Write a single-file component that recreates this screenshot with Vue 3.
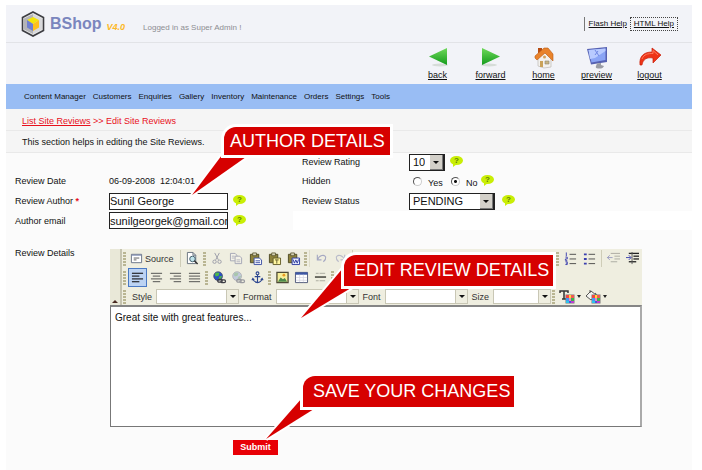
<script setup>
import { ref } from 'vue'

const author = ref('Sunil George')
const email = ref('sunilgeorgek@gmail.com')
const rating = ref('10')
const hidden = ref('no')
const status = ref('PENDING')
const details = ref('Great site with great features...')

const menu = ['Content Manager', 'Customers', 'Enquiries', 'Gallery', 'Inventory', 'Maintenance', 'Orders', 'Settings', 'Tools']

const actions = [
  { name: 'back', art: '<defs><linearGradient id="gb" x1="0" y1="0" x2="0" y2="1"><stop offset="0" stop-color="#6fd95a"/><stop offset="1" stop-color="#149b1c"/></linearGradient></defs><ellipse cx="13" cy="18" rx="8" ry="1.5" fill="#d6dcd8"/><path d="M2 9.500L20 1V18Z" fill="url(#gb)"/>' },
  { name: 'forward', art: '<defs><linearGradient id="gf" x1="0" y1="0" x2="0" y2="1"><stop offset="0" stop-color="#6fd95a"/><stop offset="1" stop-color="#149b1c"/></linearGradient></defs><ellipse cx="9" cy="18" rx="8" ry="1.500" fill="#d6dcd8"/><path d="M20 9.500L2 1V18Z" fill="url(#gf)"/>' },
  { name: 'home', art: '<path d="M5 10L11 5L18 11V20L11 21L5 19Z" fill="#f3f1ee" stroke="#bdb9b4" stroke-width=".7"/><path d="M5 1H9V6H5Z" fill="#b64c12"/><path d="M2 9L11 1H15L20 7V14L12 6L4 13L2 11Z" fill="#e9832c" stroke="#b95b15" stroke-width=".6"/><path d="M7 14H10V20H7Z" fill="#caa25a"/><path d="M12 14H16V17H12Z" fill="#c9b583" stroke="#8d8672" stroke-width=".6"/><circle cx="11.500" cy="10" r="1.500" fill="#d5a15c"/>' },
  { name: 'preview', art: '<path d="M1 2L21 0V15L5 17.500Z" fill="#5661b2"/><path d="M2.500 3L19.500 1.500V13L5.500 15.500Z" fill="#8aa4f5"/><path d="M2.500 3L19.500 1.500V4L9 11L4 12Z" fill="#b8caff"/><path d="M9 3L13 9M12 4L9 8" stroke="#6f86e2" stroke-width="1"/><path d="M11 16.500L15 16V18L18 19Q17 22 12 21.500Q9 21 10 19Z" fill="#9a9ca5"/>' },
  { name: 'logout', art: '<path d="M1 18C0 9 5 5 13 5V1L22 8L14 16V11C8 10 4 12 3 18Z" fill="#ee3417" stroke="#c81e08" stroke-width=".7"/><path d="M3 12C5 7 9 6.500 14 6.500V3.500L19 8" fill="none" stroke="#ff7a5c" stroke-width="1"/>' }
]

const lines = (rows, c = '#4a4a48') => rows.map(([x, y, w]) => `<path d="M${x} ${y}h${w}" stroke="${c}"/>`).join('')
const clip = '<path d="M1.500 2.500H10.500V11.500H1.500Z" fill="#8d823c" stroke="#4e4924"/><path d="M4 1H8V4H4Z" fill="#d7d4b6" stroke="#4e4924" stroke-width=".8"/>'
const globe = (a, b, k) => `<circle cx="5.500" cy="5.500" r="4.800" fill="${a}" stroke="${k}" stroke-width=".6"/><path d="M3 1.500L7 2L6 5L3 6L2 4ZM7 6L10 5L8 9L6 8Z" fill="${b}"/><g fill="none" stroke="${k}" stroke-width="1.300"><rect x="5" y="9" width="5" height="3" rx="1.500"/><rect x="8.500" y="9.500" width="5" height="3" rx="1.500"/></g>`
const palette = '<path d="M5.500 4.500H14.500V13.500H5.500Z" fill="#777"/><path d="M6 5h3v3H6z" fill="#f04444"/><path d="M9 5h2v3H9z" fill="#ffd83a"/><path d="M11 5h3v3h-3z" fill="#f05a50"/><path d="M6 8h3v3H6z" fill="#3e9ded"/><path d="M9 8h2v3H9z" fill="#f07acd"/><path d="M11 8h3v3h-3z" fill="#3ab54a"/><path d="M6 11h3v2H6z" fill="#2dc4ea"/><path d="M9 11h2v2H9z" fill="#5050d8"/><path d="M11 11h3v2h-3z" fill="#c03cd0"/>'

const art = {
  preview: '<path d="M1.500 .5H7.500L10.500 3.500V12.500H1.500Z" fill="#fff" stroke="#66707c"/><path d="M7.500 .5V3.500H10.500" fill="none" stroke="#66707c"/><circle cx="7" cy="7.500" r="3" fill="#bfe3ea" stroke="#3c5a66"/><path d="M9 9.500L12.500 13" stroke="#333" stroke-width="1.600"/>',
  cut: '<g fill="none" stroke="#9b9ca8"><path d="M4 1L8 8.500M9 1L5 8.500"/><circle cx="3.800" cy="10.500" r="1.800"/><circle cx="9.200" cy="10.500" r="1.800"/></g>',
  copy: '<g fill="#f4f2e8" stroke="#a3a5b4"><path d="M.5 1.500H5.500L7.500 3.500V9.500H.5Z"/><path d="M5.500 4.500H10.500L12.500 6.500V12.500H5.500Z"/></g><path d="M2 4.500h3M2 6.500h3M7 8.500h4M7 10.500h4" stroke="#a3a5b4" stroke-width=".8"/>',
  paste: clip + '<path d="M5.500 6.500H11L13.500 8.500V13.500H5.500Z" fill="#fff" stroke="#3b4fa3"/><path d="M7 9.500h5M7 11.500h5" stroke="#3b4fa3"/>',
  pasteText: clip + '<path d="M5.500 6.500H13.500V13.500H5.500Z" fill="#fff6a0" stroke="#605b28"/><path d="M7.500 8.500h4M9.500 8.500v4" stroke="#605b28"/>',
  pasteWord: clip + '<path d="M5.500 6.500H13.500V13.500H5.500Z" fill="#eef2ff" stroke="#2b3aa0"/><path d="M6.500 8L8 12L9.500 8.500L11 12L12.500 8" fill="none" stroke="#2b3aa0"/>',
  undo: '<path d="M2.500 3V8.500H7M2.500 8.500C5 3 10 2.500 11.500 5.500Q12 8 9 10.500" fill="none" stroke="#a5a8c2" stroke-width="1.200"/>',
  redo: '<path d="M11.500 3V8.500H7M11.500 8.500C9 3 4 2.500 2.500 5.500Q2 8 5 10.500" fill="none" stroke="#b9bbca" stroke-width="1.200"/>',
  find: '<path d="M2.500 2v9M11.500 2v9M2.500 6.500h9" stroke="#a5a8b2"/>',
  select: '<path d="M1.500 1.500H12.500V12.500H1.500Z" fill="none" stroke="#8b8c88" stroke-dasharray="2 1"/>',
  erase: '<path d="M2 11L8 3L12 5L7 12Z" fill="#e8dbc9" stroke="#99907c"/>',
  ol: lines([[6, 2.5, 7], [6, 7.5, 7], [6, 12.5, 7]]) + '<path d="M2.500 .5v4M1.500 5.500h2v2h-2v1.500h2M1.500 10.500h2v3h-2M2 12h1.500" fill="none" stroke="#3a3fae"/>',
  ul: lines([[6, 2.5, 7], [6, 7.5, 7], [6, 12.5, 7]]) + '<path d="M1 1.500h3v2H1zM1 6.500h3v2H1zM1 11.500h3v2H1z" fill="#3a3fae"/>',
  outdent: lines([[4, 1.5, 10], [8, 4.5, 6], [8, 7.5, 6], [4, 10.5, 7]], '#aaa99f') + '<path d="M0 6h6M3 3.500L.5 6L3 8.500" fill="none" stroke="#9a9cc0"/>',
  indent: '<g stroke-width="1.400">' + lines([[3, 1.5, 11], [8, 4.5, 6], [8, 7.5, 6], [3, 10.5, 8]], '#222') + '</g><path d="M6.500 0v13" stroke="#555"/><path d="M0 6h5M3 3.500L5.500 6L3 8.500" fill="none" stroke="#3a3fae"/>',
  left: '<g stroke-width="1.400">' + lines([[1, 2.5, 12], [1, 5.5, 8], [1, 8.5, 12], [1, 11.5, 8]], '#30333a') + '</g>',
  center: lines([[1, 2.5, 12], [3, 5.5, 8], [1, 8.5, 12], [3, 11.5, 8]]),
  right: lines([[1, 2.5, 12], [5, 5.5, 8], [1, 8.5, 12], [5, 11.5, 8]]),
  full: lines([[1, 2.5, 12], [1, 5.5, 12], [1, 8.5, 12], [1, 11.5, 12]]),
  link: globe('#2a50c4', '#4cb848', '#3c3c44'),
  unlink: globe('#c2cadc', '#a9c6ad', '#9a9ba0'),
  anchor: '<g fill="none" stroke="#2c4690" stroke-width="1.200"><circle cx="7" cy="2.500" r="1.500"/><path d="M7 4V12.500M4 6H10M2 8.500Q3 12 7 12.500Q11 12 12 8.500M1 10L2 8L3.500 9.500M10.500 9.500L12 8L13 10"/></g>',
  image: '<path d="M1 1.500H13V12.500H1Z" fill="#f7ef9a" stroke="#4d4a35" stroke-width="1.400"/><path d="M2 11.500L5 7L7.500 9L9.500 7.500L12 11.500Z" fill="#4d8a4c"/><circle cx="8.500" cy="4.500" r="1.500" fill="#e89b22"/>',
  table: '<path d="M.5 1.500H13.500V12.500H.5Z" fill="#fff" stroke="#4c5577"/><path d="M.5 1.500H13.500V4H.5Z" fill="#3c56a5"/><path d="M5 4V12M9 4V12M1 7H13M1 10H13" stroke="#d5d6e2" stroke-width=".8"/>',
  rule: lines([[2, 2.5, 3], [6, 2.5, 6], [2, 10.5, 3], [6, 10.5, 6]], '#a9a99d') + '<path d="M1 6.500h12" stroke="#55554d" stroke-width="1.800"/>',
  textColor: '<path d="M0 3V1H8V3M4 1V9M2 9H6" fill="none" stroke="#333" stroke-width="1.500"/>' + palette,
  fillColor: '<path d="M0 6L5 1L10 5L5 10Z" fill="#f4f4f0" stroke="#555"/><path d="M4 3V0M9 3Q11 4 11 6" fill="none" stroke="#555"/>' + palette
}

const row1a = ['cut', 'copy', 'paste', 'pasteText', 'pasteWord']
const row1b = ['undo', 'redo']
const row1c = ['find', 'select', 'erase']
const row1d = ['ol', 'ul']
const row1e = ['outdent', 'indent']
const row2a = ['left', 'center', 'right', 'full']
const row2b = ['link', 'unlink', 'anchor']
const row2c = ['image', 'table', 'rule']
const combos = [{ name: 'Style' }, { name: 'Format' }, { name: 'Font' }, { name: 'Size', small: true }]
</script>

<template>
  <div class="shell">
    <header class="top">
      <svg class="logo" viewBox="0 0 24 26" aria-hidden="true">
        <path d="M12 1L22.500 6.500V19.500L12 25L1.500 19.500V6.500Z" fill="#e9e9e9" stroke="#3d3d42" stroke-width="1.600" />
        <path d="M12 3L3 7.500V18.500L12 23Z" fill="#b4b4b8" />
        <path d="M12 3L21 7.500V18.500L12 23Z" fill="#d9d9dc" />
        <path d="M12 6L18 9L12 13L6 9Z" fill="#f4e50a" />
        <path d="M6 9L12 13V20L6 16.500Z" fill="#6f7fd0" />
        <path d="M18 9L12 13V20L18 16.500Z" fill="#ffbf1c" />
      </svg>
      <span class="brand">BShop</span>
      <span class="version">V4.0</span>
      <span class="who">Logged in as Super Admin !</span>
      <nav class="help" aria-label="Help">
        <a href="#flash">Flash Help</a>
        <a href="#html" class="focused">HTML Help</a>
      </nav>
    </header>

    <nav class="actions" aria-label="Page actions">
      <a v-for="a in actions" :key="a.name" :href="'#' + a.name">
        <svg viewBox="0 0 22 22" aria-hidden="true" v-html="a.art"></svg>
        <span>{{ a.name }}</span>
      </a>
    </nav>

    <nav class="menu" aria-label="Main">
      <a v-for="m in menu" :key="m" href="#menu">{{ m }}</a>
    </nav>

    <div class="crumbs"><a href="#reviews">List Site Reviews</a> &gt;&gt; Edit Site Reviews</div>
    <p class="intro">This section helps in editing the Site Reviews.</p>

    <form @submit.prevent>
      <div class="fields">
        <span></span><span></span>
        <label class="side" for="rating">Review Rating</label>
        <div class="value">
          <span class="drop">
            <select id="rating" v-model="rating" class="short"><option>10</option><option>9</option></select>
            <i class="knob"></i>
          </span>
          <span class="hint">?</span>
        </div>

        <span>Review Date</span>
        <span class="date">06-09-2008&nbsp; 12:04:01</span>
        <span id="hidden-label" class="side">Hidden</span>
        <div class="value radios" role="radiogroup" aria-labelledby="hidden-label">
          <label><input v-model="hidden" type="radio" name="hidden" value="yes"><span>Yes</span></label>
          <label><input v-model="hidden" type="radio" name="hidden" value="no"><span>No</span></label>
          <span class="hint">?</span>
        </div>

        <label for="author">Review Author <b>*</b></label>
        <div class="value"><input id="author" v-model="author" type="text" class="text"><span class="hint">?</span></div>
        <label class="side" for="status">Review Status</label>
        <div class="value">
          <span class="drop">
            <select id="status" v-model="status"><option>PENDING</option><option>APPROVED</option></select>
            <i class="knob"></i>
          </span>
          <span class="hint far">?</span>
        </div>

        <label for="email">Author email</label>
        <div class="value"><input id="email" v-model="email" type="text" class="text"><span class="hint">?</span></div>
        <div class="blank"></div>
      </div>

      <div class="details">
        <label for="details">Review Details</label>
        <div class="editor">
          <div class="toolbar">
            <button type="button" class="fold" aria-label="Collapse toolbar"></button>
            <div class="rows">
              <div class="row">
                <i class="grip"></i>
                <button type="button" class="source">
                  <svg viewBox="0 0 14 14"><path d="M1.500 2.500H12.500V11.500H1.500Z" fill="#fff" stroke="#667085" /><path d="M2 3.500H12" stroke="#7f8cb4" /><path d="M4 6.500h6M4 8.500h3" stroke="#555" /></svg>
                  Source
                </button>
                <i class="bar"></i>
                <button type="button" class="tool" aria-label="preview"><svg viewBox="0 0 14 14" v-html="art.preview"></svg></button>
                <i class="grip"></i>
                <button v-for="t in row1a" :key="t" type="button" class="tool" :aria-label="t"><svg viewBox="0 0 14 14" v-html="art[t]"></svg></button>
                <i class="grip"></i>
                <i class="bar"></i>
                <button v-for="t in row1b" :key="t" type="button" class="tool" :aria-label="t"><svg viewBox="0 0 14 14" v-html="art[t]"></svg></button>
                <i class="bar"></i>
                <button v-for="t in row1c" :key="t" type="button" class="tool" :aria-label="t"><svg viewBox="0 0 14 14" v-html="art[t]"></svg></button>
                <span class="grow"></span>
                <i class="grip"></i>
                <button v-for="t in row1d" :key="t" type="button" class="tool" :aria-label="t"><svg viewBox="0 0 14 14" v-html="art[t]"></svg></button>
                <i class="bar"></i>
                <button v-for="t in row1e" :key="t" type="button" class="tool" :aria-label="t"><svg viewBox="0 0 14 14" v-html="art[t]"></svg></button>
              </div>
              <div class="row">
                <i class="grip"></i>
                <button v-for="t in row2a" :key="t" type="button" class="tool" :class="{ on: t === 'left' }" :aria-label="t"><svg viewBox="0 0 14 14" v-html="art[t]"></svg></button>
                <i class="grip"></i>
                <button v-for="t in row2b" :key="t" type="button" class="tool" :aria-label="t"><svg viewBox="0 0 14 14" v-html="art[t]"></svg></button>
                <i class="grip"></i>
                <button v-for="t in row2c" :key="t" type="button" class="tool" :aria-label="t"><svg viewBox="0 0 14 14" v-html="art[t]"></svg></button>
                <i class="grip"></i>
              </div>
              <div class="row">
                <i class="grip"></i>
                <label v-for="c in combos" :key="c.name" class="combo">
                  {{ c.name }}
                  <span class="pick" :class="{ small: c.small }"><select><option></option></select><i></i></span>
                </label>
                <i class="grip"></i>
                <button type="button" class="tool wide" aria-label="Text color"><svg viewBox="0 0 14 14" v-html="art.textColor"></svg><i></i></button>
                <button type="button" class="tool wide" aria-label="Background color"><svg viewBox="0 0 14 14" v-html="art.fillColor"></svg><i></i></button>
              </div>
            </div>
          </div>
          <textarea id="details" v-model="details" spellcheck="false"></textarea>
        </div>
      </div>

      <button class="submit" type="submit">Submit</button>
    </form>

    <div class="callout author">
      <svg viewBox="0 0 60 50"><path d="M34 6L4 46L58 8Z" fill="#d60000" stroke="#fff" stroke-width="4" paint-order="stroke" /></svg>
      <span>AUTHOR DETAILS</span>
    </div>
    <div class="callout edit">
      <svg viewBox="0 0 60 50"><path d="M46 -4L4 46L54 16Z" fill="#d60000" stroke="#fff" stroke-width="4" paint-order="stroke" /></svg>
      <span>EDIT REVIEW DETAILS</span>
    </div>
    <div class="callout save">
      <svg viewBox="0 0 60 50"><path d="M40 5L4 46L52 16Z" fill="#d60000" stroke="#fff" stroke-width="4" paint-order="stroke" /></svg>
      <span>SAVE YOUR CHANGES</span>
    </div>
  </div>
</template>

<style>
body { margin: 0; background: #fff; }
</style>

<style scoped>
* { box-sizing: border-box; }
.shell {
  position: relative;
  margin: 5px 10px 0 6px;
  padding-bottom: 15px;
  background: #fbfbfb;
  font: 9px/12px "Liberation Sans", Arial, sans-serif;
  color: #111;
}
i { font-style: normal; }
button { font: inherit; color: inherit; border: 0; padding: 0; background: none; }
svg { display: block; overflow: visible; }

.top {
  display: flex;
  align-items: center;
  height: 38px;
  padding: 0 14px 0 15px;
  background: #f2f3f8;
  border-bottom: 1px solid #e2e3e7;
}
.logo { width: 24px; height: 26px; }
.brand { margin-left: 5px; font-size: 16px; line-height: 20px; font-weight: bold; color: #7b86be; }
.version { margin: 6px 0 0 5px; font-size: 9px; font-weight: bold; font-style: italic; color: #fdb827; }
.who { margin: 8px 0 0 18px; font-size: 8px; color: #8d8d92; }
.help { display: flex; align-items: center; margin-left: auto; padding-left: 4px; border-left: 1px solid #777; font-size: 8px; line-height: 12px; }
.help a { color: #111; }
.help .focused { margin-left: 3px; padding: 0 3px; border: 1px dotted #444; }

.actions {
  display: flex;
  justify-content: flex-end;
  height: 41px;
  padding: 4px 16px 0 0;
  background: #f2f3f8;
}
.actions a { display: flex; flex-direction: column; align-items: center; width: 53px; color: #111; }
.actions svg { width: 22px; height: 22px; }

.menu { display: flex; align-items: center; gap: 7px; height: 25px; padding: 1px 18px 0; background: #99bdf4; font-size: 8px; }
.menu a { color: #111; text-decoration: none; }
.crumbs { height: 22px; padding: 6px 16px 0; background: #f5f5f5; border-bottom: 1px solid #e9e9e9; color: #e8101c; }
.crumbs a { color: inherit; }
.intro { height: 22px; margin: 0; padding: 5px 16px 0; background: #f5f5f5; border-bottom: 1px solid #e9e9e9; }

.fields { display: grid; grid-template-columns: 94px 184px 116px 1fr; grid-template-rows: 18px 20px 20px 19px; align-items: center; padding-left: 9px; }
.fields b { color: #e8101c; }
.side { padding-left: 9px; }
.value { display: flex; align-items: center; }
.blank { grid-column: 3 / 5; align-self: stretch; background: #fff; }
.text { width: 119px; height: 17px; padding: 0; border: 1px solid #222; background: #fff; font: 11px/14px "Liberation Sans", Arial, sans-serif; color: #111; }
.drop { position: relative; }
.drop select { display: block; appearance: none; width: 86px; height: 17px; margin: 0; padding: 0 18px 0 3px; border: 1px solid #222; border-right-width: 2px; border-radius: 0; background: #fff; font: 11px/14px "Liberation Sans", Arial, sans-serif; color: #111; }
.drop .short { width: 36px; }
.knob { position: absolute; top: 1px; right: 2px; width: 13px; height: 15px; background: #d3d0c9; border-right: 1px solid #777; border-bottom: 1px solid #777; pointer-events: none; }
.knob::after { content: ""; position: absolute; top: 6px; left: 3px; border: 3px solid transparent; border-top-color: #111; border-bottom: 0; }
.hint { position: relative; width: 13px; height: 9px; margin: -3px 0 0 5px; border-radius: 50%; background: #c9ee05; font-size: 8px; line-height: 9px; font-weight: bold; text-align: center; color: #5d8206; }
.hint::after { content: ""; position: absolute; left: 3px; top: 8px; border-right: 4px solid transparent; border-top: 3px solid #c9ee05; }
.far { margin-left: 7px; }
.radios label { display: flex; align-items: center; width: 38px; padding-left: 4px; }
.radios label span { padding-top: 4px; }
.radios .hint { margin-left: -4px; }
.radios input { appearance: none; width: 9px; height: 9px; margin: 0 6px 0 0; border: 1px solid; border-color: #555 #ccc #ccc #555; border-radius: 50%; background: #fff; }
.radios input:checked { background: radial-gradient(circle, #111 0 1px, #fff 2px); }

.details { display: flex; margin-top: 19px; padding: 0 50px 0 9px; }
.details > label { flex: none; width: 95px; line-height: 9px; }
.editor { flex: 1; min-width: 0; }
.toolbar { display: flex; height: 56px; background: #efeee0; }
.fold { position: relative; width: 12px; border-right: 2px solid #c6c4b0; background: #e9e8d8; }
.fold::after { content: ""; position: absolute; left: 2px; bottom: 2px; border: 3px solid transparent; border-bottom-color: #4a2a22; border-top: 0; }
.rows { flex: 1; min-width: 0; }
.row { display: flex; align-items: center; height: 19px; }
.grip { flex: none; width: 3px; height: 14px; margin: 0 2px 0 1px; background: repeating-linear-gradient(#b9b592 0 2px, #efeee0 2px 3px); }
.bar { flex: none; width: 1px; height: 17px; margin: 0 2px; background: #cfcdb8; }
.grip + .bar { margin-left: 0; background: #dedcc9; }
.grow { flex: 1; }
.tool { flex: none; display: flex; align-items: center; justify-content: center; width: 19px; height: 19px; }
.tool svg { width: 13px; height: 13px; }
.on { background: #bcd3f3; border: 1px solid #4a79c4; }
.source { display: flex; align-items: center; gap: 2px; padding: 0 4px 0 2px; font-size: 9px; color: #333; }
.source svg { width: 13px; height: 13px; }
.combo { display: flex; align-items: center; gap: 4px; padding-left: 4px; color: #333; }
.pick { position: relative; width: 83px; }
.pick.small { width: 58px; }
.pick select { display: block; appearance: none; width: 100%; height: 15px; margin: 0; border: 1px solid #c9c7b5; border-radius: 0; background: linear-gradient(to left, #efeee0 11px, #c9c7b5 11px 12px, #fff 12px); }
.pick i { position: absolute; top: 6px; right: 3px; border: 3px solid transparent; border-top-color: #111; border-bottom: 0; pointer-events: none; }
.wide { gap: 3px; width: 26px; }
.wide svg { width: 14px; height: 14px; }
.wide i { border: 2px solid transparent; border-top: 3px solid #222; border-bottom: 0; }
textarea { display: block; width: 100%; height: 122px; margin: 0; padding: 5px 4px; border: 1px solid #777; border-top: 2px solid #858585; border-right: 2px solid #aaa; border-radius: 0; background: #fff; resize: none; outline: 0; font: 10px/12px "Liberation Sans", Arial, sans-serif; color: #111; }

.submit { display: block; margin: 13px 0 0 227px; width: 45px; height: 15px; background: #e80006; font-size: 9px; line-height: 15px; font-weight: bold; color: #fff; }

.callout { position: absolute; }
.callout span { position: relative; display: block; padding: 0 6px; border-radius: 12px 0 0 0; background: #d60000; box-shadow: 0 0 0 3px #fff; font-size: 18px; line-height: 31px; color: #fff; white-space: nowrap; }
.callout svg { position: absolute; left: -36px; top: 22px; width: 60px; height: 50px; }
.author { left: 218px; top: 122px; }
.author span { line-height: 28px; padding: 0 5px 0 6px; }
.edit { left: 338px; top: 250px; }
.edit span { padding: 0 4px 0 10px; }
.edit svg { left: -47px; top: 17px; }
.save { left: 297px; top: 371px; }
.save span { padding: 0 4px 0 10px; }
.save svg { left: -41px; top: 17px; }
</style>
